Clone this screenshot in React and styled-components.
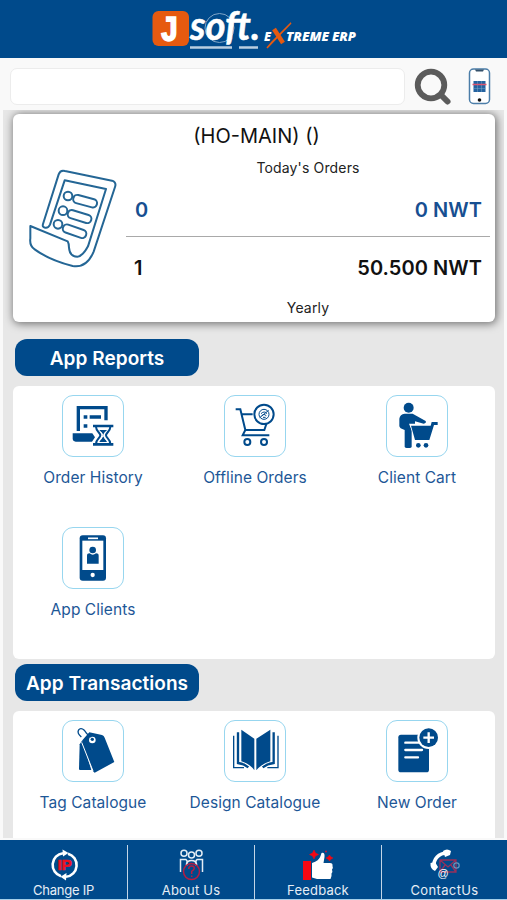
import React from 'react';
import styled, { createGlobalStyle } from 'styled-components';

const GlobalStyle = createGlobalStyle`
    * {
        box-sizing: border-box;
    }

    body {
        margin: 0;
        background: #f9f9f9;
        font-family: Inter, "Liberation Sans", sans-serif;
    }
`;

const Screen = styled.div`
    width: 507px;
    height: 900px;
    display: flex;
    flex-direction: column;
    overflow: hidden;
    background: #f9f9f9;
`;

const Header = styled.header`
    height: 58px;
    flex: none;
    display: flex;
    justify-content: center;
    padding-left: 3px;
    background: #004a8b;
`;

const SearchBar = styled.div`
    height: 52px;
    flex: none;
    display: flex;
    align-items: flex-start;
    padding: 10px 16px 0 10px;
`;

const SearchInput = styled.input`
    width: 395px;
    height: 37px;
    padding: 0 12px;
    border: solid 1px #ececec;
    border-radius: 7px;
    background: #ffffff;
    font-size: 16px;
    outline: none;
`;

const SearchIcon = styled.svg`
    width: 38px;
    height: 38px;
    margin-left: 9px;
`;

const ScanIcon = styled.svg`
    width: 23px;
    height: 37px;
    margin-left: 16px;
`;

const Content = styled.main`
    height: 728px;
    flex: none;
    margin: 0 3px;
    padding: 4px 9px 0 10px;
    overflow: hidden;
    background: #e7e7e7;
`;

const SummaryCard = styled.section`
    height: 208px;
    display: flex;
    flex-direction: column;
    border-radius: 6px;
    background: #ffffff;
    box-shadow: 1px 1px 9px 1px rgba(0, 0, 0, 0.5);
`;

const Branch = styled.div`
    padding: 10px 0 0 5px;
    font-size: 20px;
    line-height: 24px;
    text-align: center;
    color: #111111;
`;

const SummaryBody = styled.div`
    display: flex;
    height: 174px;
`;

const OrderIcon = styled.svg`
    width: 90px;
    height: 102px;
    flex: none;
    margin: 19px 8px 0 15px;
`;

const Figures = styled.div`
    width: 364px;
    display: flex;
    flex-direction: column;
`;

const Caption = styled.div`
    height: 20px;
    margin-top: ${(props) => props.$top};
    font-size: 14px;
    line-height: 20px;
    letter-spacing: 0.15px;
    text-align: center;
    color: #222222;
`;

const FigureRow = styled.div`
    height: 58px;
    display: flex;
    justify-content: space-between;
    align-items: center;
    padding: ${(props) => props.$padding};
    font-size: 20px;
    font-weight: 600;
    letter-spacing: 0.05px;
    color: ${(props) => props.$color};
`;

const Divider = styled.div`
    height: 1px;
    background: #a9a9a9;
`;

const SectionTitle = styled.h2`
    width: 184px;
    height: 37px;
    margin: ${(props) => props.$margin};
    padding-top: 1px;
    display: flex;
    align-items: center;
    justify-content: center;
    border-radius: 12px;
    background: #004a8b;
    color: #ffffff;
    font-size: 19px;
    font-weight: 600;
    letter-spacing: 0.05px;
    white-space: nowrap;
`;

const Panel = styled.section`
    height: ${(props) => props.$height};
    display: grid;
    grid-template-columns: repeat(3, 162px);
    grid-auto-rows: 132px;
    justify-content: center;
    padding: 9px 0 0 2px;
    border-radius: 6px;
    background: #ffffff;
`;

const MenuItem = styled.div`
    display: flex;
    flex-direction: column;
    align-items: center;
`;

const Tile = styled.div`
    width: 62px;
    height: 62px;
    border: solid 1px #97d6ef;
    border-radius: 11px;
    color: #004a8b;

    svg {
        display: block;
        width: 60px;
        height: 60px;
    }
`;

const MenuLabel = styled.div`
    margin-top: 11px;
    font-size: 15.5px;
    line-height: 20px;
    letter-spacing: 0.06px;
    white-space: nowrap;
    color: #1d5797;
`;

const TabBar = styled.nav`
    height: 60px;
    flex: none;
    margin-top: 2px;
    display: grid;
    grid-template-columns: 128px 127px 127px 125px;
    background: #004a8b;
    border-bottom: solid 1px #a5cfe9;
`;

const Tab = styled.div`
    display: flex;
    flex-direction: column;
    align-items: center;
    margin-top: 5px;
    border-right: ${(props) => (props.$last ? 'none' : 'solid 1.5px #c3d5e6')};
    color: #e6eef6;
    font-size: 13px;
    line-height: 18px;
    letter-spacing: ${(props) => props.$spacing || '0.2px'};

    svg {
        width: 40px;
        height: 36px;
        flex: none;
    }
`;

const Logo = () => (
    <svg width="250" height="58" viewBox="130 0 250 58">
        <rect x="152.5" y="11" width="36.5" height="35" rx="6" fill="#e65a10" />
        <text x="160" y="40.5" fontFamily="Liberation Mono, monospace" fontWeight="bold" fontSize="37" textLength="19" lengthAdjust="spacingAndGlyphs" fill="#fff" stroke="#fff" strokeWidth="1.4">J</text>
        <circle cx="219.5" cy="28" r="14.5" fill="none" stroke="#7fa5c7" strokeWidth="1" />
        <text x="190" y="39.5" fontFamily="Lato, sans-serif" fontWeight="bold" fontStyle="italic" fontSize="41" textLength="70" lengthAdjust="spacingAndGlyphs" fill="#fff" stroke="#fff" strokeWidth=".5">soft.</text>
        <path d="M190 47.5H232M239 47.5H258" stroke="#b9cee1" strokeWidth="2.5" />
        <g fontFamily="Open Sans, sans-serif" fontWeight="800" fontStyle="italic" fill="#fff">
            <text x="264" y="41" fontSize="12" textLength="7" lengthAdjust="spacingAndGlyphs">E</text>
            <text x="286" y="41" fontSize="13" textLength="43" lengthAdjust="spacingAndGlyphs">TREME</text>
            <text x="332" y="41" fontSize="13" textLength="24" lengthAdjust="spacingAndGlyphs">ERP</text>
        </g>
        <path d="M291 23L267 48L272 42Z" fill="#e65a10" stroke="#e65a10" strokeWidth="1.5" />
        <path d="M274 29L283 43" stroke="#e65a10" strokeWidth="4.5" />
    </svg>
);

const OrderHistoryIcon = () => (
    <svg viewBox="191 199 180 180" fill="none" stroke="currentColor" strokeWidth="10">
        <path d="M237 304V234H320V272" />
        <path d="M253 262H264M271 262H305M253 289H264" />
        <path d="M220 311H279L287 323L278 336H229Q220 336 220 326Z" fill="currentColor" stroke="none" />
        <path d="M281 289H342M281 344H342" strokeWidth="8" />
        <path d="M290 291C290 305 303 309 303 317C303 325 290 329 290 342M333 291C333 305 320 309 320 317C320 325 333 329 333 342" strokeWidth="6" />
        <path d="M300 301H323L313 312V321L323 337H300L310 321V312Z" fill="currentColor" stroke="none" />
        <path d="M304 306L311 318L304 330M319 306L312 318L319 330" stroke="#fff" strokeWidth="3" />
    </svg>
);

const OfflineOrdersIcon = () => (
    <svg viewBox="75 48 180 180" fill="none" stroke="currentColor" strokeWidth="6">
        <path d="M107 88H121L136 150H193L199 132M127 103H158M136 150L128 166H208" />
        <circle cx="142" cy="186" r="9" />
        <circle cx="192" cy="186" r="9" />
        <circle cx="192" cy="103" r="29" />
        <circle cx="192" cy="103" r="15" strokeWidth="3" />
        <path d="M179 113L206 91M183 101Q193 91 201 101M185 107Q192 99 199 107M189 112H197" strokeWidth="3" />
    </svg>
);

const ClientCartIcon = () => (
    <svg viewBox="561 48 180 180" fill="currentColor">
        <circle cx="626" cy="83" r="15" />
        <path d="M614 101H638L677 123Q680 130 671 131L645 124V131H627L635 151V200Q635 204 625 204Q614 204 614 200V150Q598 145 598 138V116Q600 103 614 101Z" />
        <path d="M633 137H692L695 126H713V135H702L688 180H645Z" stroke="#fff" strokeWidth="4" paintOrder="stroke" />
        <circle cx="655" cy="196" r="7" />
        <circle cx="678" cy="196" r="7" />
    </svg>
);

const AppClientsIcon = () => (
    <svg viewBox="191 55 180 180" fill="currentColor">
        <rect x="241" y="77" width="79" height="136" rx="9" />
        <rect x="249" y="93" width="63" height="88" fill="#fff" />
        <path d="M266 86H296" stroke="#fff" strokeWidth="5" />
        <circle cx="280" cy="196" r="6.5" fill="#fff" />
        <circle cx="280" cy="121" r="10" />
        <path d="M263 162V138Q263 131 271 131Q280 139 290 131Q298 131 298 138V162Z" />
    </svg>
);

const TagIcon = () => (
    <svg viewBox="191 64 180 180" fill="currentColor">
        <path d="M241 134L249 122L276 211H242Q239 211 239 207Z" />
        <path d="M249 122L270 98L308 106Q314 108 316 114L345 187L286 219Q282 217 280 212L249 134Z" />
        <path d="M247 128L281 214" stroke="#fff" strokeWidth="3" />
        <circle cx="279" cy="121" r="10" fill="#fff" />
        <circle cx="279" cy="119" r="5" />
        <path d="M246 112C226 95 242 79 254 91C262 99 264 109 276 112" fill="none" stroke="currentColor" strokeWidth="4" />
    </svg>
);

const BookIcon = () => (
    <svg viewBox="675 64 180 180" fill="currentColor">
        <path d="M724 90L763 117V212Q751 193 724 185ZM811 90L769 117V212Q784 193 811 185Z" />
        <g fill="none" stroke="currentColor">
            <path d="M714 98V190Q732 192 745 203M821 98V190Q802 192 788 203" strokeWidth="7" />
            <path d="M701 108V204H732M834 108V204H802" strokeWidth="4" />
        </g>
    </svg>
);

const NewOrderIcon = () => (
    <svg viewBox="399 64 180 180" fill="currentColor">
        <rect x="433" y="105" width="92" height="113" rx="8" />
        <path d="M454 129H500M454 151H504M454 173H492" stroke="#fff" strokeWidth="7" strokeLinecap="round" />
        <circle cx="524" cy="114" r="34" fill="#fff" />
        <circle cx="524" cy="114" r="28" />
        <path d="M524 98V130M508 114H540" stroke="#fff" strokeWidth="7" />
    </svg>
);

const ChangeIpIcon = () => (
    <svg viewBox="0 0 40 36" fill="none" stroke="#fff" strokeWidth="2.6">
        <path d="M17 31.2A11.8 11.8 0 0 1 19 8.2M24 8.7A11.8 11.8 0 0 1 22 31.8" />
        <path d="M18.5 4.5L24.5 8L19 11.5ZM22.5 28L16.5 31.8L22 35.5Z" fill="#fff" stroke="none" />
        <text x="13.5" y="25" fontFamily="Liberation Sans, sans-serif" fontWeight="bold" fontSize="14.5" textLength="14" lengthAdjust="spacingAndGlyphs" fill="#ed1022" stroke="#ed1022" strokeWidth=".6">IP</text>
    </svg>
);

const AboutIcon = () => (
    <svg viewBox="0 0 40 36" fill="none" stroke="#e4edf5" strokeWidth="1.5">
        <circle cx="13" cy="8.3" r="3" />
        <circle cx="20.5" cy="10" r="3" />
        <circle cx="28" cy="8.3" r="3" />
        <path d="M9.5 27V14.5H15Q17 16 15.5 19V21M31.5 27V14.5H26Q24 16 25.5 19V21M16 19Q16 15.5 20.5 15.5T25 19" />
        <circle cx="20.5" cy="26.5" r="8" stroke="#b51d43" />
        <path d="M17.7 24Q18 21 20.5 21Q23.5 21 23.2 23.5Q23 25 20.7 26.3V29M20.7 30.5V32" stroke="#b51d43" />
    </svg>
);

const FeedbackIcon = () => (
    <svg viewBox="0 0 40 36">
        <path d="M5 16H13V35H5Z" fill="#f60712" />
        <path d="M14 18Q21 16 22.5 11L23.5 8Q27 7 26.5 12L25.5 18H32Q35 18 34.5 21Q35.5 23 34 24.5Q35 27 33.5 28.5Q34 31 32.5 34H19L14 32.5Z" fill="#fff" />
        <path d="M16 5L17.5 8L20.5 9.5L17.5 11L16 14L14.5 11L11.5 9.5L14.5 8ZM31.5 10L33 12L35 13L33 14L31.5 16L30 14L28 13L30 12Z" fill="#f60712" stroke="#f60712" strokeWidth=".5" />
        <circle cx="28" cy="6.5" r="1.1" fill="#b51d43" />
    </svg>
);

const ContactIcon = () => (
    <svg viewBox="0 0 40 36" fill="none">
        <path d="M9 22C8 14 14 8 22 8" stroke="#fff" strokeWidth="3.6" />
        <path d="M5.5 18L10 17L13 22L10 26Q5 24 5.5 18ZM18 6Q22 3 26 6L25 10L20 12Z" fill="#fff" />
        <path d="M15 15H31V27H15ZM15 15L23 22L31 15M15 27L20 20M31 27L26 20" stroke="#96305b" strokeWidth="1.3" />
        <circle cx="31.5" cy="20.5" r="2.7" stroke="#6994ba" strokeWidth="1.2" />
        <text x="12.5" y="32" fontFamily="Liberation Sans, sans-serif" fontSize="11" fill="#fff">@</text>
    </svg>
);

const reports = [
    { label: 'Order History', icon: <OrderHistoryIcon /> },
    { label: 'Offline Orders', icon: <OfflineOrdersIcon /> },
    { label: 'Client Cart', icon: <ClientCartIcon /> },
    { label: 'App Clients', icon: <AppClientsIcon /> },
];

const transactions = [
    { label: 'Tag Catalogue', icon: <TagIcon /> },
    { label: 'Design Catalogue', icon: <BookIcon /> },
    { label: 'New Order', icon: <NewOrderIcon /> },
];

const tabs = [
    { label: 'Change IP', icon: <ChangeIpIcon />, spacing: '-0.25px' },
    { label: 'About Us', icon: <AboutIcon /> },
    { label: 'Feedback', icon: <FeedbackIcon /> },
    { label: 'ContactUs', icon: <ContactIcon />, spacing: '0.35px' },
];

function Menu({ items, height }) {
    return (
        <Panel $height={height}>
            {items.map((item) => (
                <MenuItem key={item.label}>
                    <Tile>{item.icon}</Tile>
                    <MenuLabel>{item.label}</MenuLabel>
                </MenuItem>
            ))}
        </Panel>
    );
}

function App() {
    return (
        <>
            <GlobalStyle />
            <Screen>
                <Header>
                    <Logo />
                </Header>
                <SearchBar>
                    <SearchInput type="text" aria-label="Search" />
                    <SearchIcon viewBox="0 0 38 38" fill="none" stroke="#5b5b5b">
                        <circle cx="17" cy="17" r="13.3" strokeWidth="5.8" />
                        <path d="M27 27L33.5 33.5" strokeWidth="6" strokeLinecap="round" />
                    </SearchIcon>
                    <ScanIcon viewBox="0 0 23 37">
                        <rect x="1.5" y="1" width="20" height="34.5" rx="4" fill="#fff" stroke="#4b7da8" strokeWidth="1.5" />
                        <path d="M7 1.5H16L15 3.5H8Z" fill="#35516b" />
                        <rect x="5.5" y="13" width="12" height="11" fill="#2563a0" />
                        <path d="M9.5 13V24M13.5 13V24M5.5 20.5H17.5" stroke="#7ca4c9" strokeWidth=".5" />
                        <path d="M4.5 16.5H18.5" stroke="#dc5570" strokeWidth="1.5" />
                        <circle cx="11.5" cy="32" r="1.8" fill="#111" />
                    </ScanIcon>
                </SearchBar>
                <Content>
                    <SummaryCard>
                        <Branch>(HO-MAIN) ()</Branch>
                        <SummaryBody>
                            <OrderIcon viewBox="84 170 270 306" fill="none" stroke="#246695" strokeWidth="6" strokeLinejoin="round">
                                <path d="M129 341L176 192Q181 178 195 182L336 211Q350 216 345 230L281 424Q260 474 218 467Q149 450 104 417Q88 407 91 384V347L203 393Q207 400 207 412Q209 439 232 439Q248 438 264 408L318 236L194 210L150 343Q145 354 135 352Q126 351 129 341Z" />
                                <circle cx="204" cy="257" r="13" />
                                <circle cx="189" cy="301" r="13" />
                                <circle cx="174" cy="342" r="13" />
                                <rect x="219" y="260" width="73" height="25" rx="12" transform="rotate(15 255 272)" />
                                <rect x="202" y="306" width="73" height="25" rx="12" transform="rotate(17 238 319)" />
                                <rect x="187" y="350" width="73" height="25" rx="12" transform="rotate(19 223 363)" />
                            </OrderIcon>
                            <Figures>
                                <Caption $top="10px">Today's Orders</Caption>
                                <FigureRow $color="#174f91" $padding="5px 8px 0 9px">
                                    <span>0</span>
                                    <span>0 NWT</span>
                                </FigureRow>
                                <Divider />
                                <FigureRow $color="#111111" $padding="4px 8px 0 8px">
                                    <span>1</span>
                                    <span>50.500 NWT</span>
                                </FigureRow>
                                <Caption $top="3px">Yearly</Caption>
                            </Figures>
                        </SummaryBody>
                    </SummaryCard>
                    <SectionTitle $margin="17px 0 10px 2px">App Reports</SectionTitle>
                    <Menu items={reports} height="273px" />
                    <SectionTitle $margin="5px 0 10px 2px">App Transactions</SectionTitle>
                    <Menu items={transactions} height="140px" />
                </Content>
                <TabBar>
                    {tabs.map((tab, i) => (
                        <Tab key={tab.label} $last={i === tabs.length - 1} $spacing={tab.spacing}>
                            {tab.icon}
                            <span>{tab.label}</span>
                        </Tab>
                    ))}
                </TabBar>
            </Screen>
        </>
    );
}

export default App;
